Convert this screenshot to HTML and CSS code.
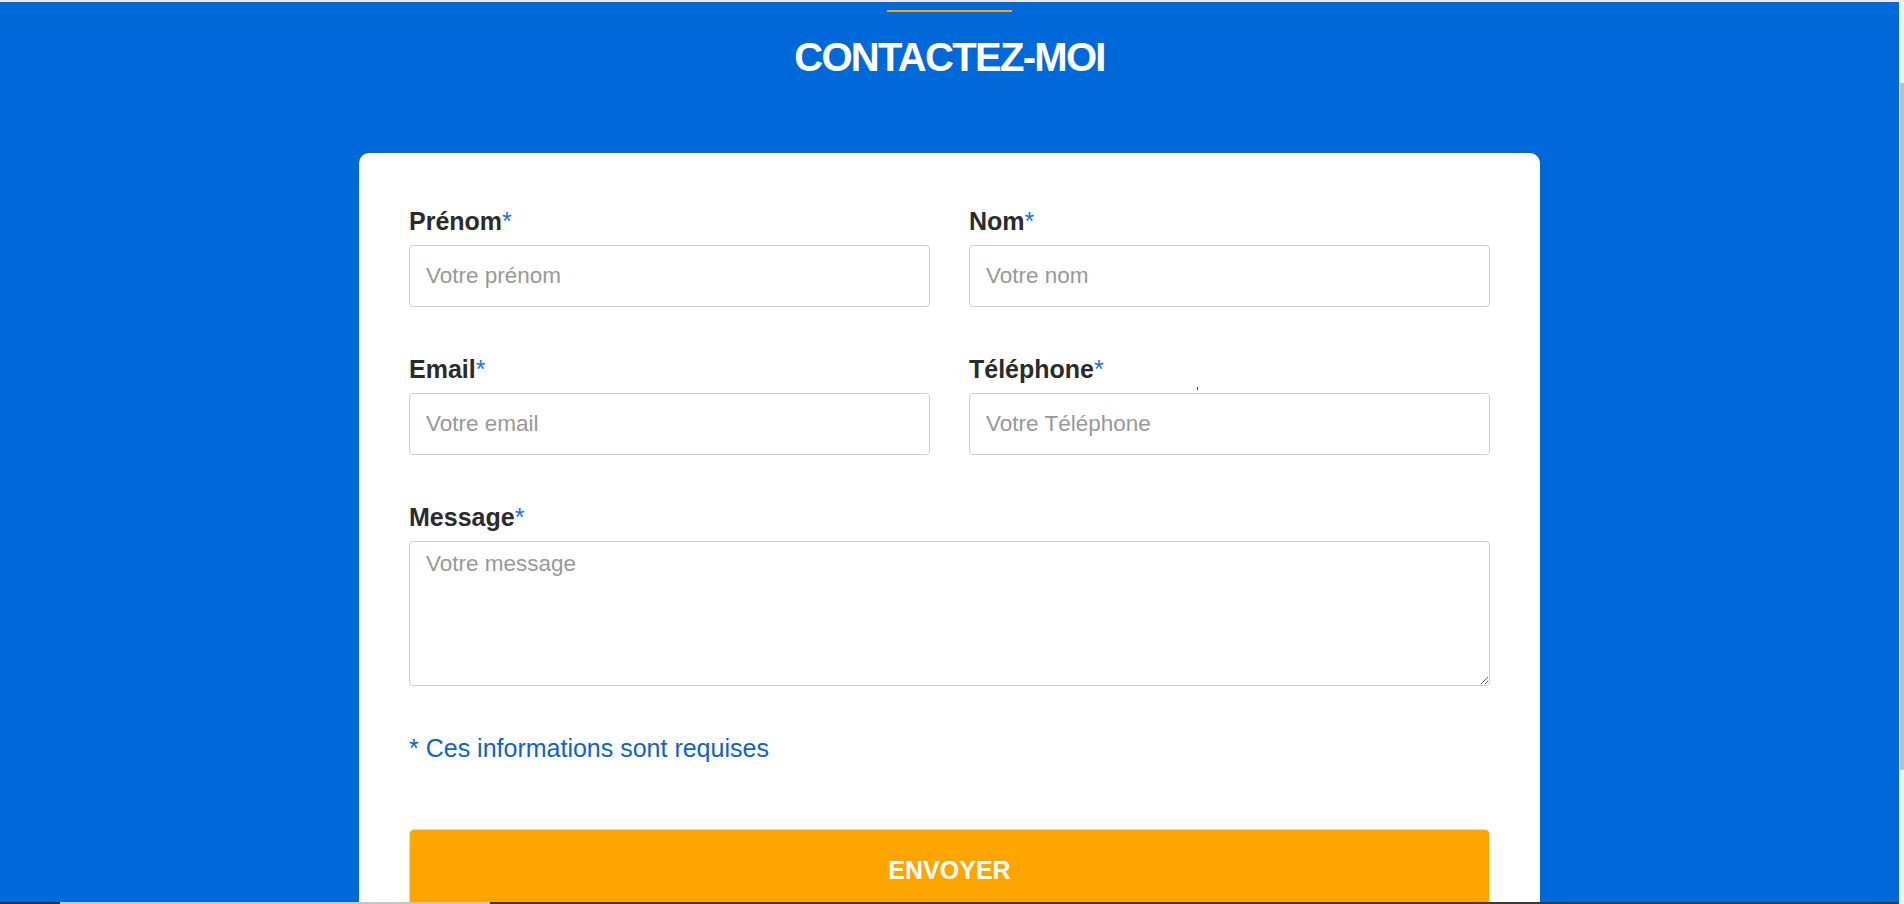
FILE: index.html
```html
<!DOCTYPE html>
<html lang="fr">
<head>
<meta charset="utf-8">
<title>Contactez-moi</title>
<link rel="stylesheet" href="styles.css">
</head>
<body>
<div class="screen">
  <div class="page">
    <div class="topline"></div>
    <section class="contact">
      <div class="accent"></div>
      <h2 class="title">CONTACTEZ-MOI</h2>
      <form class="card">
        <div class="grid">
          <div class="field">
            <label class="label">Prénom<span class="req">*</span></label>
            <input class="input" type="text" placeholder="Votre prénom">
          </div>
          <div class="field">
            <label class="label">Nom<span class="req">*</span></label>
            <input class="input" type="text" placeholder="Votre nom">
          </div>
          <div class="field">
            <label class="label">Email<span class="req">*</span></label>
            <input class="input" type="email" placeholder="Votre email">
          </div>
          <div class="field">
            <label class="label">Téléphone<span class="req">*</span></label>
            <input class="input" type="tel" placeholder="Votre Téléphone">
            <span class="mark"></span>
          </div>
          <div class="field field-wide">
            <label class="label">Message<span class="req">*</span></label>
            <textarea class="textarea" placeholder="Votre message"></textarea>
          </div>
        </div>
        <p class="note">* Ces informations sont requises</p>
        <button class="submit" type="button">ENVOYER</button>
      </form>
    </section>
    <div class="bottomline">
      <span class="seg seg-dark1"></span><span class="seg seg-light"></span><span class="seg seg-dark2"></span>
    </div>
  </div>
  <div class="scrollbar"><div class="thumb"></div></div>
</div>
</body>
</html>
```

FILE: styles.css
```css
* { box-sizing: border-box; }

html, body {
  margin: 0;
  padding: 0;
  height: 904px;
  overflow: hidden;
  font-family: "Liberation Sans", Arial, sans-serif;
}

.screen {
  display: flex;
  height: 904px;
}

.page {
  flex: 1;
  display: flex;
  flex-direction: column;
  height: 904px;
  background: #0069d9;
  overflow: hidden;
}

.topline {
  height: 2px;
  flex: none;
  background: #ececec;
}

.contact {
  flex: 1;
  display: flex;
  flex-direction: column;
  align-items: center;
  padding-top: 8px;
  overflow: hidden;
  min-height: 0;
}

.contact > * {
  flex: none;
}

.accent {
  width: 125px;
  height: 2px;
  background: #ffa500;
}

.title {
  margin: 25px 0 0;
  height: 40px;
  font-size: 40px;
  line-height: 40px;
  font-weight: 700;
  letter-spacing: -1.7px;
  color: #ffffff;
  white-space: nowrap;
}

.card {
  width: 1181px;
  margin-top: 76px;
  background: #ffffff;
  border-radius: 10px 10px 0 0;
  padding: 54px 50px 60px 50px;
}

.grid {
  display: grid;
  grid-template-columns: 521px 521px;
  column-gap: 39px;
  row-gap: 48px;
}

.field {
  display: flex;
  flex-direction: column;
  position: relative;
}

.field-wide {
  grid-column: 1 / -1;
}

.label {
  font-size: 25px;
  line-height: 28px;
  font-weight: 700;
  color: #2b2b2b;
  margin-bottom: 10px;
}

.req {
  color: #1a73e0;
  font-weight: 400;
}

.input,
.textarea {
  width: 100%;
  border: 1px solid #cccccc;
  border-radius: 4px;
  font-family: "Liberation Sans", Arial, sans-serif;
  font-size: 22.5px;
  color: #333;
  background: #fff;
  outline: none;
}

.input {
  height: 62px;
  padding: 0 16px;
}

.textarea {
  height: 145px;
  padding: 9px 16px;
  line-height: 25px;
  resize: vertical;
}

.input::placeholder,
.textarea::placeholder {
  color: #999999;
}

.mark {
  position: absolute;
  left: 228px;
  top: 32px;
  width: 1px;
  height: 3px;
  background: #a0127a;
}

.note {
  margin: 48px 0 0;
  font-size: 25px;
  line-height: 28px;
  color: #0c62d2;
}

.submit {
  display: block;
  width: 100%;
  height: 82px;
  margin-top: 67px;
  background: #ffa500;
  border: 1px solid #dcdcdc;
  border-radius: 5px;
  color: #ffffff;
  font-family: "Liberation Sans", Arial, sans-serif;
  font-size: 25px;
  font-weight: 700;
  line-height: 28px;
}

.bottomline {
  height: 2px;
  flex: none;
  display: flex;
  background: #3a3a3a;
}

.seg { height: 2px; }
.seg-dark1 { width: 60px; background: #2f2f2f; }
.seg-light { width: 430px; background: #c6c6c6; }
.seg-dark2 { flex: 1; background: #3a3a3a; }

.scrollbar {
  width: 5px;
  flex: none;
  background: #f1f1f1;
  padding-top: 83px;
}

.thumb {
  width: 4px;
  margin-left: 1px;
  height: 687px;
  background: #c1c1c1;
}
```
